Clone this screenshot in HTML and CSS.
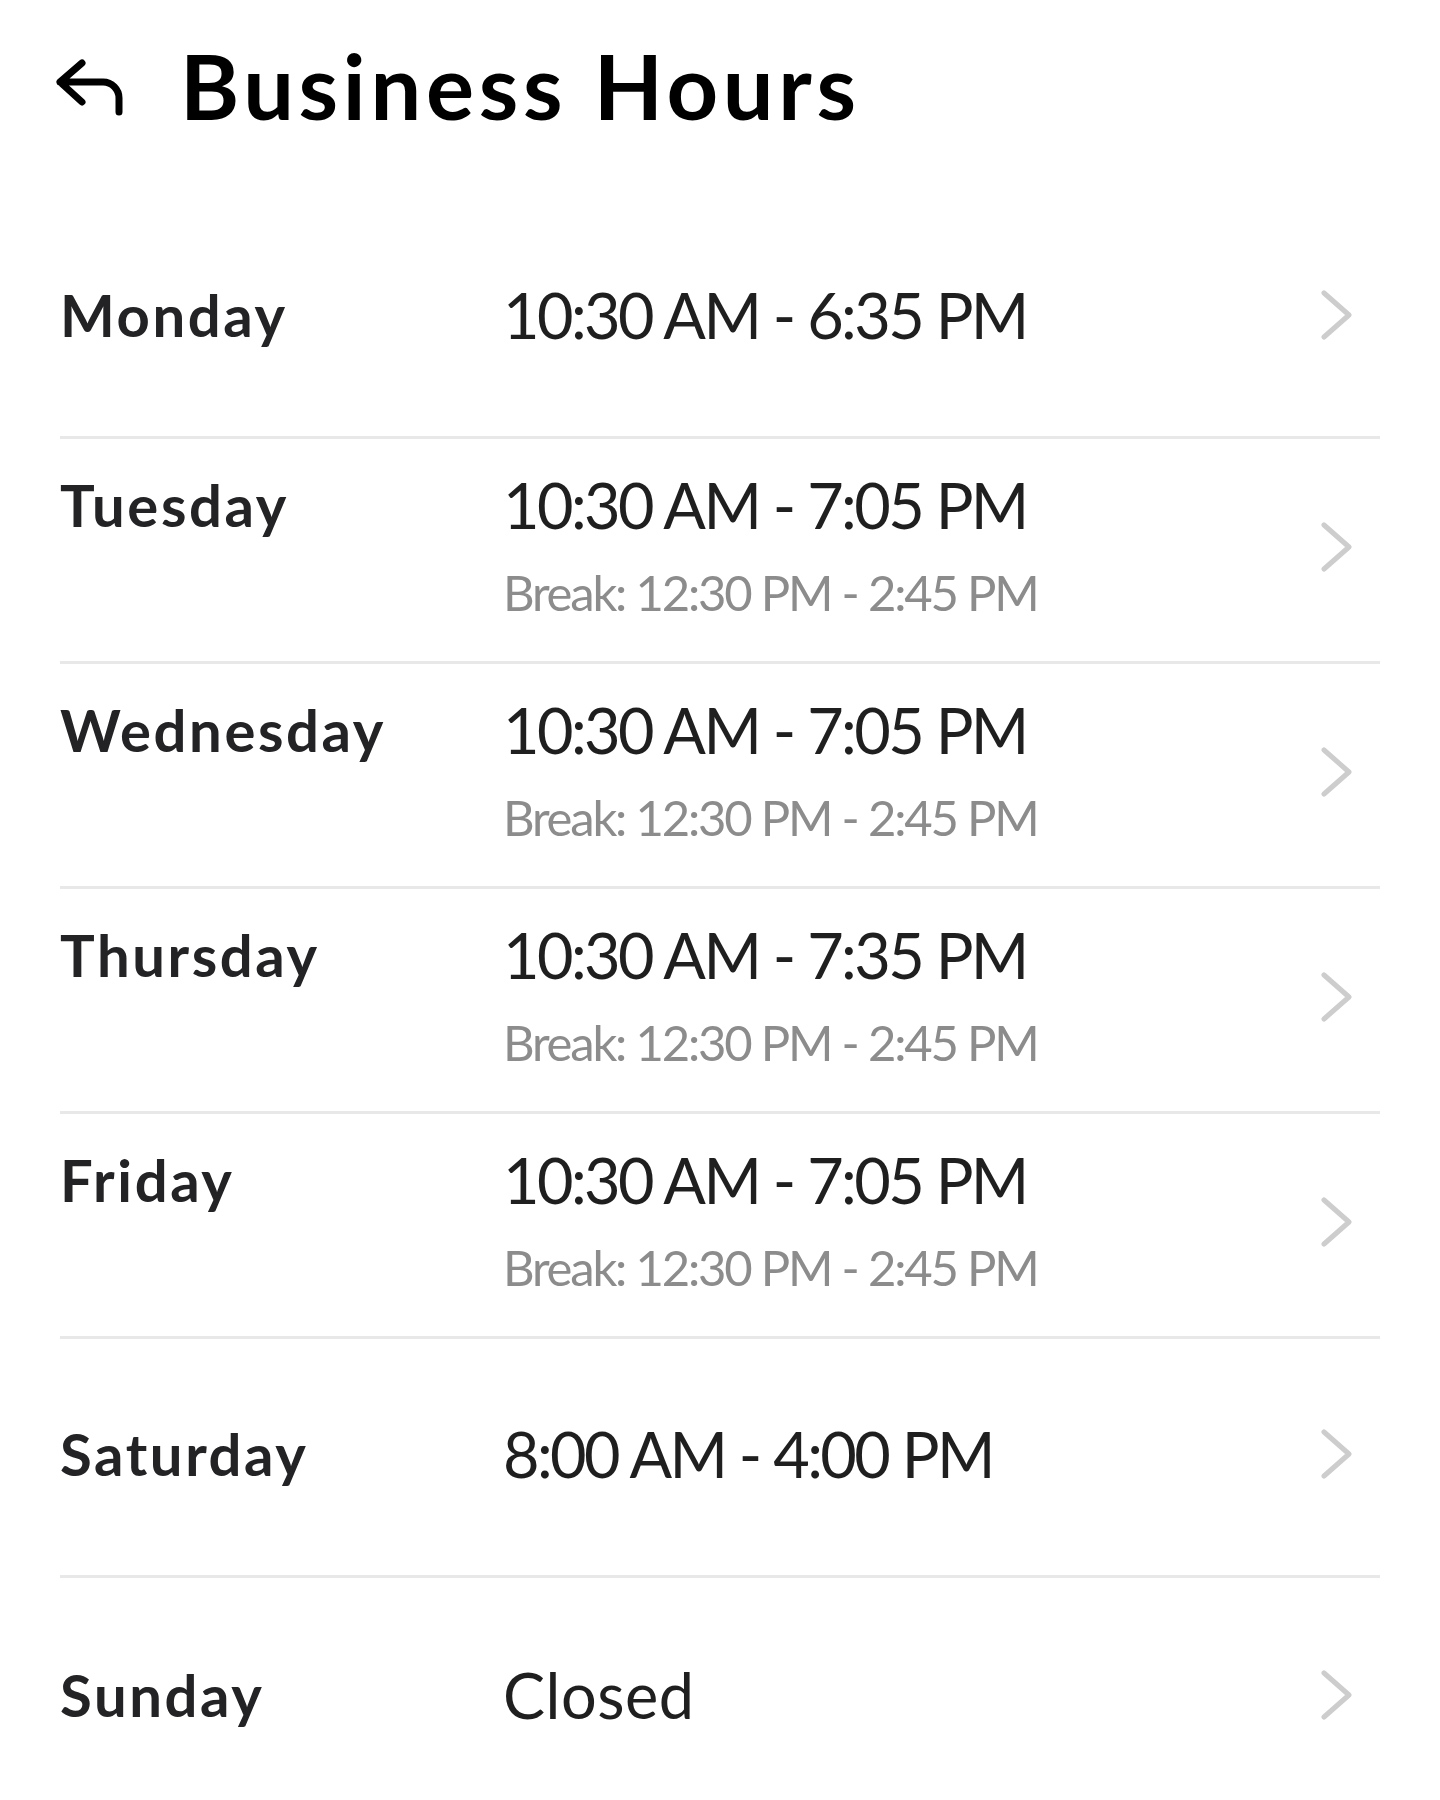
FILE: index.html
```html
<!DOCTYPE html>
<html lang="en">
<head>
    <meta charset="UTF-8">
    <meta name="viewport" content="width=device-width, initial-scale=1.0">
    <title>Business Hours</title>
    <link rel="stylesheet" href="styles.css">
</head>
<body>
    <header class="top-bar">
        <button class="back-btn" aria-label="Back">
            <svg width="72" height="62" viewBox="0 0 72 62" fill="none" stroke="#000" stroke-width="7" stroke-linecap="round" stroke-linejoin="round">
                <path d="M28 7 L6 26 L28 46 M6 26 H49 A16 16 0 0 1 65 42 V56"/>
            </svg>
        </button>
        <h1 class="page-title">Business Hours</h1>
    </header>

    <main class="hours-list">
        <div class="day-row single">
            <div class="day-name">Monday</div>
            <div class="day-times">
                <div class="time-range">10:30 AM - 6:35 PM</div>
            </div>
            <svg class="chevron" width="32" height="50" viewBox="0 0 32 50" fill="none" stroke="#cdcdcd" stroke-width="5" stroke-linecap="round" stroke-linejoin="round"><path d="M4 3 L29 25 L4 47"/></svg>
        </div>
        <div class="day-row double">
            <div class="day-name">Tuesday</div>
            <div class="day-times">
                <div class="time-range">10:30 AM - 7:05 PM</div>
                <div class="break-range">Break: 12:30 PM - 2:45 PM</div>
            </div>
            <svg class="chevron" width="32" height="50" viewBox="0 0 32 50" fill="none" stroke="#cdcdcd" stroke-width="5" stroke-linecap="round" stroke-linejoin="round"><path d="M4 3 L29 25 L4 47"/></svg>
        </div>
        <div class="day-row double">
            <div class="day-name">Wednesday</div>
            <div class="day-times">
                <div class="time-range">10:30 AM - 7:05 PM</div>
                <div class="break-range">Break: 12:30 PM - 2:45 PM</div>
            </div>
            <svg class="chevron" width="32" height="50" viewBox="0 0 32 50" fill="none" stroke="#cdcdcd" stroke-width="5" stroke-linecap="round" stroke-linejoin="round"><path d="M4 3 L29 25 L4 47"/></svg>
        </div>
        <div class="day-row double">
            <div class="day-name">Thursday</div>
            <div class="day-times">
                <div class="time-range">10:30 AM - 7:35 PM</div>
                <div class="break-range">Break: 12:30 PM - 2:45 PM</div>
            </div>
            <svg class="chevron" width="32" height="50" viewBox="0 0 32 50" fill="none" stroke="#cdcdcd" stroke-width="5" stroke-linecap="round" stroke-linejoin="round"><path d="M4 3 L29 25 L4 47"/></svg>
        </div>
        <div class="day-row double">
            <div class="day-name">Friday</div>
            <div class="day-times">
                <div class="time-range">10:30 AM - 7:05 PM</div>
                <div class="break-range">Break: 12:30 PM - 2:45 PM</div>
            </div>
            <svg class="chevron" width="32" height="50" viewBox="0 0 32 50" fill="none" stroke="#cdcdcd" stroke-width="5" stroke-linecap="round" stroke-linejoin="round"><path d="M4 3 L29 25 L4 47"/></svg>
        </div>
        <div class="day-row single">
            <div class="day-name">Saturday</div>
            <div class="day-times">
                <div class="time-range">8:00 AM - 4:00 PM</div>
            </div>
            <svg class="chevron" width="32" height="50" viewBox="0 0 32 50" fill="none" stroke="#cdcdcd" stroke-width="5" stroke-linecap="round" stroke-linejoin="round"><path d="M4 3 L29 25 L4 47"/></svg>
        </div>
        <div class="day-row single last">
            <div class="day-name">Sunday</div>
            <div class="day-times">
                <div class="time-range closed">Closed</div>
            </div>
            <svg class="chevron" width="32" height="50" viewBox="0 0 32 50" fill="none" stroke="#cdcdcd" stroke-width="5" stroke-linecap="round" stroke-linejoin="round"><path d="M4 3 L29 25 L4 47"/></svg>
        </div>
    </main>
</body>
</html>
```

FILE: styles.css
```css
body {
    font-family: "Lato", "Open Sans", sans-serif;
    margin: 0;
    padding: 0;
    background-color: #fff;
    color: #222;
}
.top-bar {
    display: flex;
    align-items: center;
    height: 170px;
    padding-left: 54px;
    gap: 54px;
}
.back-btn {
    border: none;
    background: none;
    padding: 0;
    margin-top: 4px;
    display: flex;
    cursor: pointer;
}
.page-title {
    margin: 0;
    font-size: 90px;
    line-height: 1;
    font-weight: 700;
    color: #000;
    letter-spacing: 4.7px;
}
.hours-list {
    padding-top: 30px;
}
.day-row {
    display: flex;
    align-items: center;
    margin: 0 60px;
    border-bottom: 3px solid #e8e8e8;
    box-sizing: border-box;
    cursor: pointer;
}
.day-row.single {
    height: 239px;
    padding-bottom: 6px;
}
.day-row.double {
    height: 225px;
    padding-bottom: 7px;
}
.day-row.last {
    border-bottom: none;
}
.day-name {
    width: 443px;
    flex-shrink: 0;
    align-self: center;
    font-size: 58px;
    line-height: 64px;
    font-weight: 700;
    color: #232326;
    letter-spacing: 2.6px;
}
.double .day-name {
    align-self: auto;
    margin-bottom: 83px;
}
.day-times {
    flex: 1;
}
.time-range {
    font-size: 63px;
    line-height: 64px;
    color: #1f1f1f;
    letter-spacing: -2.6px;
}
.time-range.closed {
    letter-spacing: 0.5px;
}
.break-range {
    margin-top: 27px;
    font-size: 49px;
    line-height: 56px;
    color: #8c8c8c;
    letter-spacing: -2.2px;
}
.chevron {
    flex-shrink: 0;
    margin-right: 28px;
}
```
